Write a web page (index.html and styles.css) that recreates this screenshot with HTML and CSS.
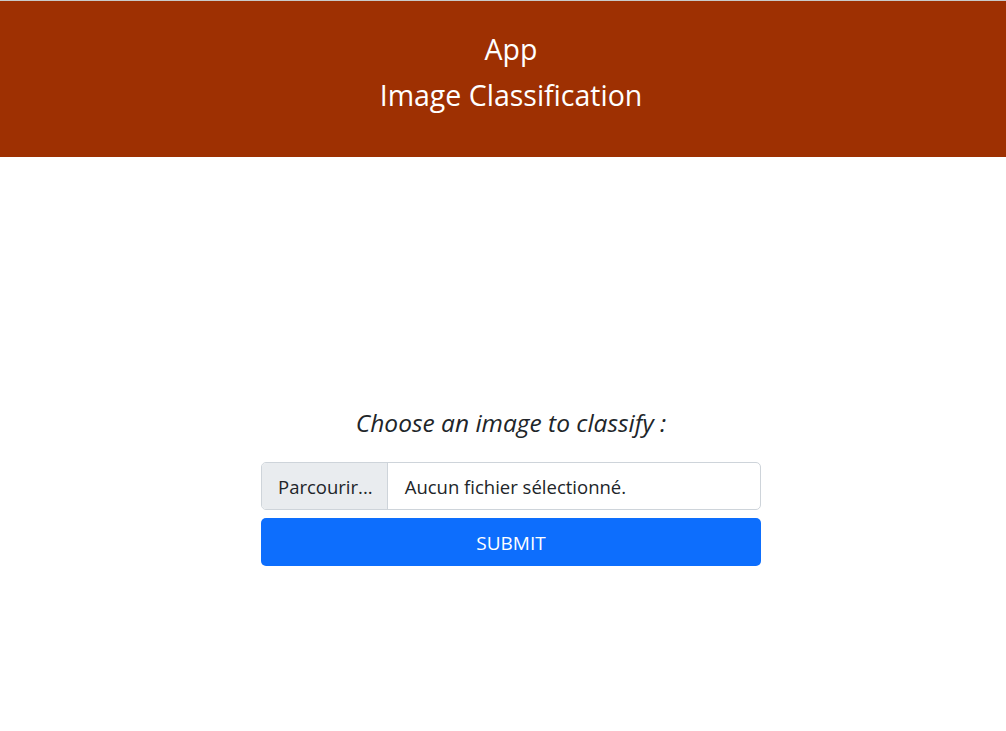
FILE: index.html
```html
<!DOCTYPE html>
<html lang="fr">
<head>
<meta charset="utf-8">
<title>App</title>
<link rel="stylesheet" href="styles.css">
</head>
<body>
<header class="banner">
  <div class="banner-title">App</div>
  <div class="banner-sub">Image Classification</div>
</header>
<main class="main">
  <form class="upload">
    <p class="prompt">Choose an image to classify :</p>
    <div class="file">
      <span class="file-btn">Parcourir...</span>
      <span class="file-name">Aucun fichier sélectionné.</span>
    </div>
    <button type="button" class="submit">SUBMIT</button>
  </form>
</main>
</body>
</html>
```
FILE: styles.css
```css
* { box-sizing: border-box; }
html, body { margin: 0; padding: 0; }
body {
  font-family: "Open Sans", "Noto Sans", sans-serif;
  color: #212529;
  background: #fff;
  border-top: 1px solid #c9c9c9;
}
.banner {
  background: #9e3002;
  color: #fff;
  height: 156px;
  padding: 25px 0 0 16px;
  text-align: center;
}
.banner-title, .banner-sub {
  font-size: 28.5px;
  line-height: 46px;
}
.main {
  display: flex;
  justify-content: center;
  padding: 247px 0 0 16px;
}
.upload {
  width: 500px;
  display: flex;
  flex-direction: column;
}
.prompt {
  margin: 0 0 20px;
  font-style: italic;
  font-size: 24.5px;
  line-height: 38px;
  text-align: center;
}
.file {
  display: flex;
  height: 48px;
  border: 1px solid #ced4da;
  border-radius: 5px;
  overflow: hidden;
  font-size: 18.5px;
}
.file-btn {
  background: #e9ecef;
  border-right: 1px solid #ced4da;
  padding: 0 14px 0 16px;
  display: flex;
  align-items: center;
}
.file-name {
  padding: 0 16px 0 17px;
  display: flex;
  align-items: center;
}
.submit {
  margin-top: 8px;
  height: 48px;
  border: 0;
  border-radius: 5px;
  background: #0d6efd;
  color: #fff;
  font-family: inherit;
  font-size: 19px;
  padding-top: 3px;
}
```
